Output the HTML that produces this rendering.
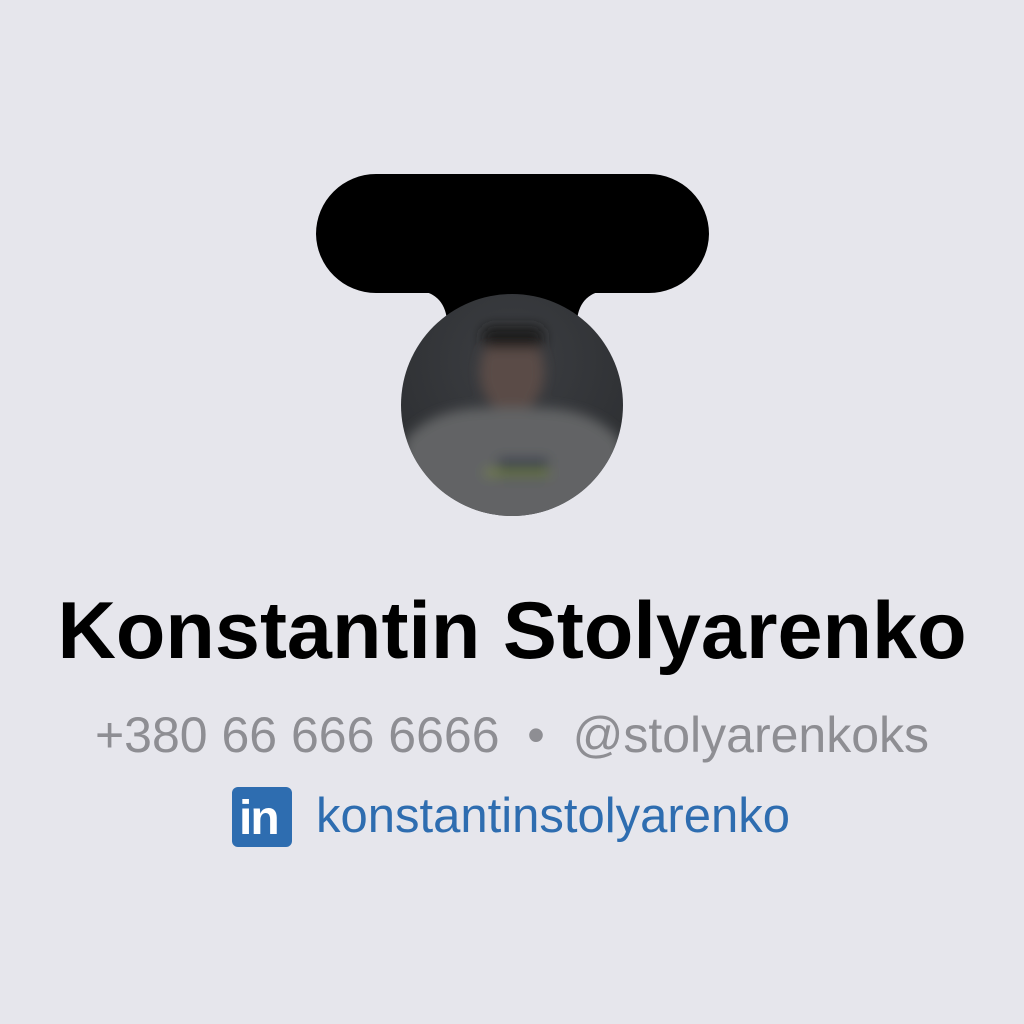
<!DOCTYPE html>
<html><head><meta charset="utf-8"><style>
html,body{margin:0;padding:0;background:#e6e6ec;width:1024px;height:1024px;overflow:hidden;font-family:"Liberation Sans",Arial,sans-serif}
.name{position:absolute;left:0;width:1024px;top:591px;line-height:1;text-align:center;font-size:81px;font-weight:bold;color:#000;white-space:nowrap}
.sub{position:absolute;left:0;width:1024px;top:710px;line-height:1;text-align:center;font-size:50px;color:#8e8e93;white-space:pre}
.li{position:absolute;left:232px;top:787px;width:60px;height:60px;background:#2e6db0;border-radius:6px}
.lt{position:absolute;left:316px;top:792px;line-height:1;font-size:49px;color:#2e6db0}
</style></head><body>
<svg width="1024" height="560" style="position:absolute;left:0;top:0">
<defs>
<radialGradient id="bg" cx="0.5" cy="0.3" r="0.7"><stop offset="0" stop-color="#3c3e42"/><stop offset="1" stop-color="#2c2e31"/></radialGradient>
<filter id="bl"><feGaussianBlur stdDeviation="6"/></filter>
<clipPath id="cc"><circle cx="512" cy="405" r="111"/></clipPath>
</defs>
<path d="M376 174 H649 A60 60 0 0 1 709 234 A60 60 0 0 1 649 293 H376 A60 60 0 0 1 316 234 A60 60 0 0 1 376 174 Z" fill="#000"/>
<path d="M415 290 Q444 292 447 320 L577 320 Q580 292 609 290 Z" fill="#000"/>
<circle cx="512" cy="405" r="111" fill="url(#bg)"/>
<g clip-path="url(#cc)" filter="url(#bl)">
<ellipse cx="512" cy="372" rx="32" ry="42" fill="#5a4c46"/>
<rect x="482" y="326" width="62" height="22" rx="10" fill="#1e1e1e"/>
<path d="M405 440 Q430 410 480 408 L545 408 Q595 410 620 440 L640 530 L390 530 Z" fill="#626365"/>
<rect x="498" y="458" width="50" height="20" fill="#3a4050"/>
<rect x="485" y="470" width="65" height="5" fill="#7a8a30"/>
</g>
</svg>
<div class="name">Konstantin Stolyarenko</div>
<div class="sub">+380 66 666 6666  •  @stolyarenkoks</div>
<div class="li"><span style="position:absolute;left:7px;top:4px;font-size:48px;font-weight:bold;color:#fff;letter-spacing:-2px">in</span></div>
<div class="lt">konstantinstolyarenko</div>
</body></html>
